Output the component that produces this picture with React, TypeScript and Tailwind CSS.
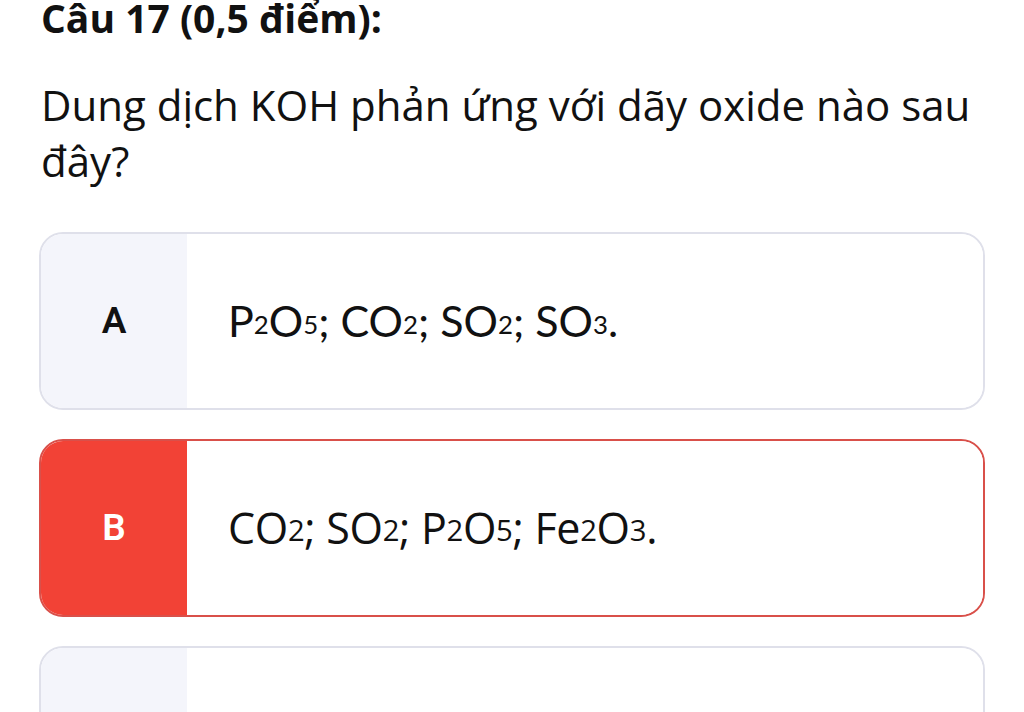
import React from 'react';

type Part = string | { sub: string };

interface Option {
    key: string;
    parts: Part[];
    selected?: boolean;
    font: string;
    subSize: string;
}

const options: Option[] = [
    {
        key: 'A',
        parts: ['P', { sub: '2' }, 'O', { sub: '5' }, '; CO', { sub: '2' }, '; SO', { sub: '2' }, '; SO', { sub: '3' }, '.'],
        font: "font-['Lato',sans-serif] text-[43px]",
        subSize: 'text-[0.6em]',
    },
    {
        key: 'B',
        parts: ['CO', { sub: '2' }, '; SO', { sub: '2' }, '; P', { sub: '2' }, 'O', { sub: '5' }, '; Fe', { sub: '2' }, 'O', { sub: '3' }, '.'],
        selected: true,
        font: "font-['Open_Sans',sans-serif] text-[43px] tracking-[-0.3px]",
        subSize: 'text-[0.68em]',
    },
    { key: 'C', parts: [], font: "font-['Open_Sans',sans-serif] text-[43px]", subSize: 'text-[0.6em]' },
];

function Formula({ parts, subSize }: { parts: Part[]; subSize: string }) {
    return (
        <>
            {parts.map((p, i) =>
                typeof p === 'string' ? (
                    <span key={i}>{p}</span>
                ) : (
                    <span key={i} className={`relative top-[3px] ${subSize}`}>
                        {p.sub}
                    </span>
                )
            )}
        </>
    );
}

export default function App() {
    return (
        <div className="w-[1024px] h-[712px] overflow-hidden bg-white px-[39px] pt-[1px] text-[#111] font-['Open_Sans',sans-serif]">
            <h1 className="text-[39px] leading-[34px] font-bold pl-[2px]">Câu 17 (0,5 điểm):</h1>
            <p className="mt-[42px] text-[42px] leading-[56px] pl-[2px]">
                Dung dịch KOH phản ứng với dãy oxide nào sau đây?
            </p>

            <div className="mt-[43px] flex flex-col gap-[29px]">
                {options.map((o) => (
                    <div
                        key={o.key}
                        className={`flex h-[178px] shrink-0 overflow-hidden rounded-[24px] border-2 ${
                            o.selected ? 'border-[#d9504a]' : 'border-[#dfe0ea]'
                        }`}
                    >
                        <div
                            className={`flex w-[146px] shrink-0 items-center justify-center font-['Roboto',sans-serif] text-[37px] font-semibold ${
                                o.selected ? 'bg-[#f24236] text-white' : 'bg-[#f4f5fb] text-[#111]'
                            }`}
                        >
                            {o.parts.length > 0 && o.key}
                        </div>
                        <div className={`flex flex-1 items-center bg-white pl-[41px] ${o.font}`}>
                            <Formula parts={o.parts} subSize={o.subSize} />
                        </div>
                    </div>
                ))}
            </div>
        </div>
    );
}
